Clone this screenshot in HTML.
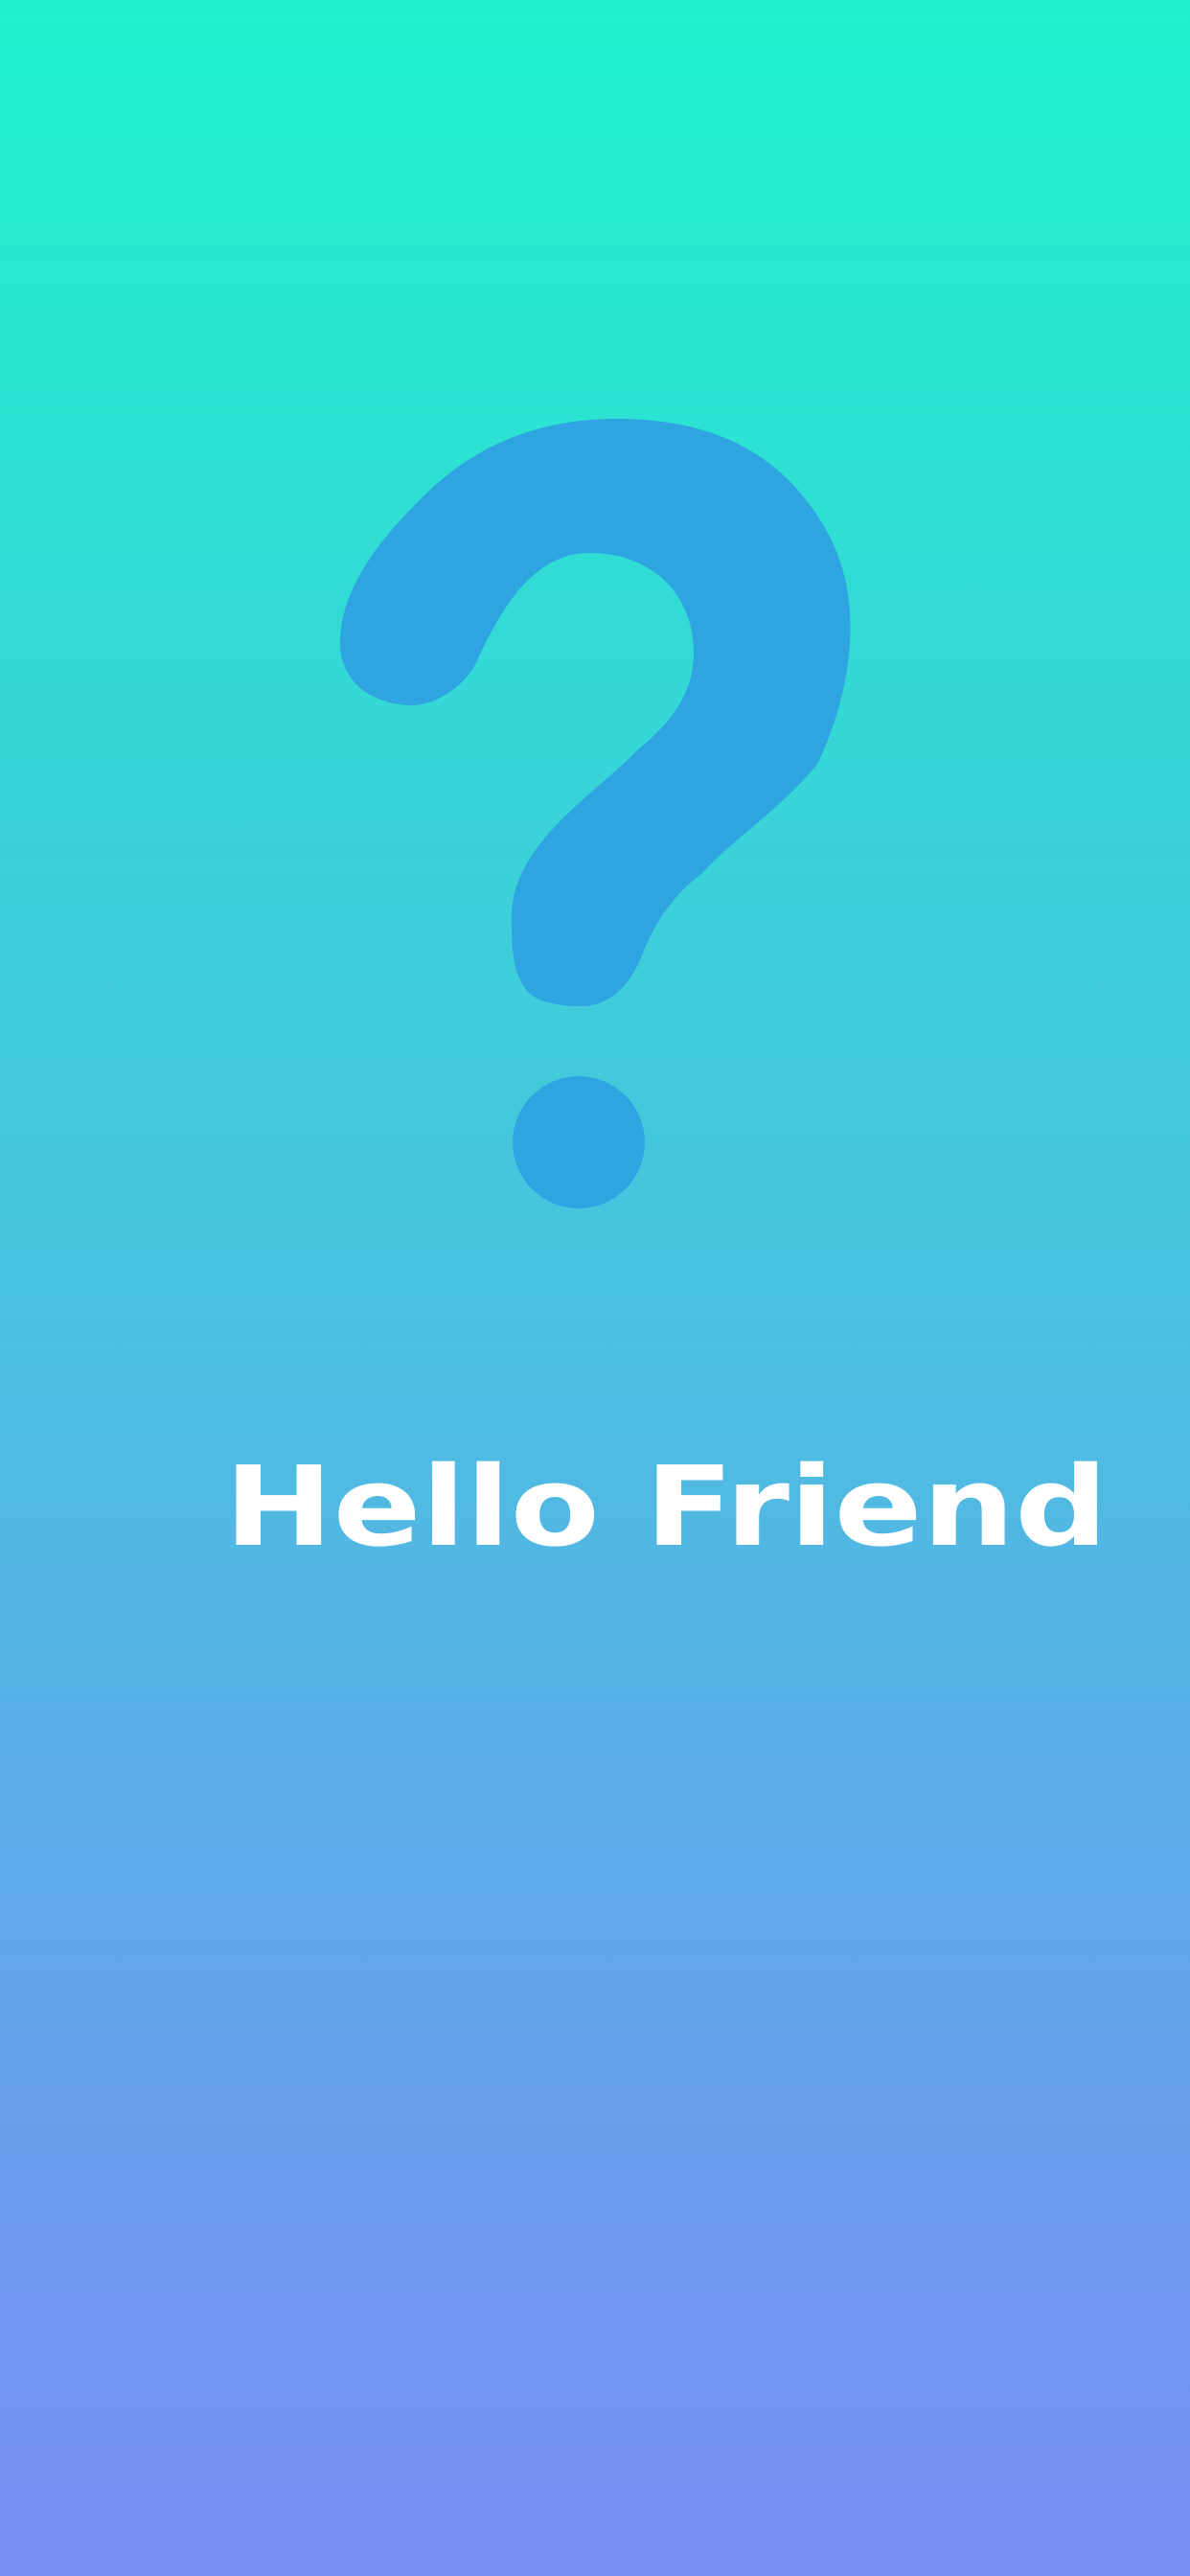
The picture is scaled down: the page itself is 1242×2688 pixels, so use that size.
<!DOCTYPE html>
<html><head><meta charset="utf-8"><style>
html,body{margin:0;padding:0;width:1242px;height:2688px;overflow:hidden}
body{background:linear-gradient(180deg,#1ef2cc 0%,#4dbde1 55%,#6c9cee 85%,#7a8ff5 100%)}
svg{position:absolute;left:0;top:0}
</style></head><body>
<svg width="1242" height="2688" viewBox="0 0 1242 2688">
<path fill="#2ea5e0" d="M644,437 C740,437 800,470 840,520 C880,570 890,620 887,670 C884,720 870,760 854,796 C820,840 760,880 733,911 C700,935 680,970 670,997 C655,1035 630,1050 608,1050 C580,1050 560,1045 550,1034 C535,1015 534,990 534,957 C534,880 620,830 666,782 C705,750 724,720 724,681 C724,620 680,577 615,577 C560,577 525,630 499,687 C490,710 460,736 429,736 C400,736 355,720 355,670 C355,620 390,570 430,530 C490,465 560,437 644,437 Z"/>
<circle cx="604" cy="1192" r="69" fill="#2ea5e0"/>
<g transform="translate(234,1612) scale(1.18,1)">
<text x="0" y="0" font-family="DejaVu Sans, sans-serif" font-weight="bold" font-size="115" fill="#ffffff">Hello Friend</text>
</g>
</svg>
</body></html>
